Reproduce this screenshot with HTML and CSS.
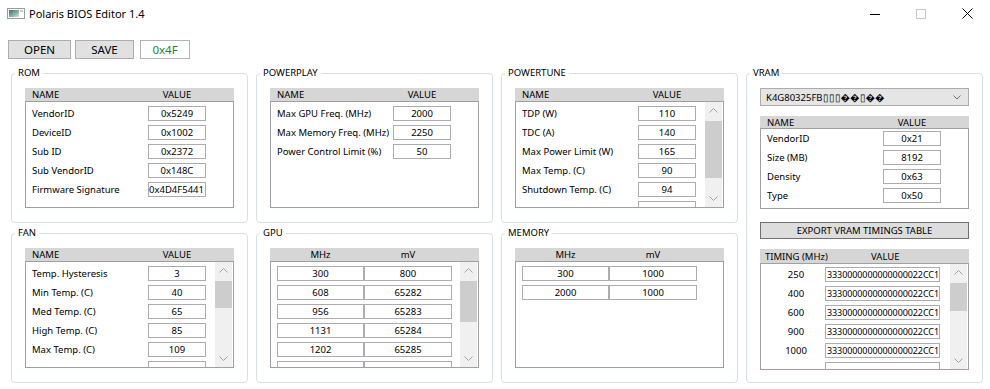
FILE: index.html
```html
<!DOCTYPE html>
<html lang="en">
<head>
    <meta charset="UTF-8">
    <title>Polaris BIOS Editor 1.4</title>
    <link rel="stylesheet" href="styles.css">
</head>
<body>
    <div class="titlebar">
        <svg class="app-icon" width="18" height="11" viewBox="0 0 18 11">
            <defs>
                <linearGradient id="ig" x1="0" y1="0" x2="1" y2="1">
                    <stop offset="0" stop-color="#3c6f7a"/>
                    <stop offset="0.6" stop-color="#8fb3a0"/>
                    <stop offset="1" stop-color="#d8e4dc"/>
                </linearGradient>
            </defs>
            <rect x="0.5" y="0.5" width="17" height="10" fill="#fff" stroke="#9a9a9a"/>
            <rect x="2" y="2" width="10" height="7" fill="url(#ig)"/>
            <rect x="13" y="2" width="3" height="2" fill="#c9c9c9"/>
        </svg>
        <span class="title">Polaris BIOS Editor 1.4</span>
        <div class="caption">
            <span class="cap-btn">
                <svg width="10" height="10" viewBox="0 0 10 10"><path d="M0 5.5H10" stroke="#000" stroke-width="1"/></svg>
            </span>
            <span class="cap-btn">
                <svg width="10" height="10" viewBox="0 0 10 10"><rect x="0.5" y="0.5" width="9" height="9" fill="none" stroke="#c6c6c6"/></svg>
            </span>
            <span class="cap-btn">
                <svg width="11" height="11" viewBox="0 0 11 11"><path d="M0.5 0.5L10.5 10.5M10.5 0.5L0.5 10.5" stroke="#000" stroke-width="1"/></svg>
            </span>
        </div>
    </div>

    <div class="toolbar">
        <button class="btn btn-open">OPEN</button>
        <button class="btn btn-save">SAVE</button>
        <div class="checksum">0x4F</div>
    </div>

    <div class="groups">
        <section class="group">
            <span class="legend">ROM</span>
            <div class="thead"><span class="hname">NAME</span><span class="hval">VALUE</span></div>
            <div class="tbody">
                <div class="rows">
                    <div class="row"><span class="name">VendorID</span><span class="field">0x5249</span></div>
                    <div class="row"><span class="name">DeviceID</span><span class="field">0x1002</span></div>
                    <div class="row"><span class="name">Sub ID</span><span class="field">0x2372</span></div>
                    <div class="row"><span class="name">Sub VendorID</span><span class="field">0x148C</span></div>
                    <div class="row"><span class="name">Firmware Signature</span><span class="field field-left">0x4D4F5441</span></div>
                </div>
            </div>
        </section>

        <section class="group">
            <span class="legend">POWERPLAY</span>
            <div class="thead"><span class="hname">NAME</span><span class="hval">VALUE</span></div>
            <div class="tbody">
                <div class="rows">
                    <div class="row"><span class="name">Max GPU Freq. (MHz)</span><span class="field">2000</span></div>
                    <div class="row"><span class="name">Max Memory Freq. (MHz)</span><span class="field">2250</span></div>
                    <div class="row"><span class="name">Power Control Limit (%)</span><span class="field">50</span></div>
                </div>
            </div>
        </section>

        <section class="group">
            <span class="legend">POWERTUNE</span>
            <div class="thead"><span class="hname">NAME</span><span class="hval">VALUE</span></div>
            <div class="tbody">
                <div class="rows">
                    <div class="row"><span class="name">TDP (W)</span><span class="field">110</span></div>
                    <div class="row"><span class="name">TDC (A)</span><span class="field">140</span></div>
                    <div class="row"><span class="name">Max Power Limit (W)</span><span class="field">165</span></div>
                    <div class="row"><span class="name">Max Temp. (C)</span><span class="field">90</span></div>
                    <div class="row"><span class="name">Shutdown Temp. (C)</span><span class="field">94</span></div>
                    <div class="row"><span class="name"></span><span class="field"></span></div>
                </div>
                <div class="scrollbar">
                    <div class="sb-btn"><svg width="9" height="5" viewBox="0 0 9 5"><path d="M0.5 4.5L4.5 0.5L8.5 4.5" fill="none" stroke="#a3a3a3"/></svg></div>
                    <div class="sb-track"><div class="sb-thumb thumb-powertune"></div></div>
                    <div class="sb-btn"><svg width="9" height="5" viewBox="0 0 9 5"><path d="M0.5 0.5L4.5 4.5L8.5 0.5" fill="none" stroke="#a3a3a3"/></svg></div>
                </div>
            </div>
        </section>

        <section class="group group-vram">
            <span class="legend">VRAM</span>
            <div class="combo">
                <span>K4G80325FB&#x25AF;&#x25AF;&#x25AF;&#xFFFD;&#xFFFD;&#x25AF;&#xFFFD;&#xFFFD;</span>
                <svg width="8" height="5" viewBox="0 0 8 5"><path d="M0.5 0.5L4 4L7.5 0.5" fill="none" stroke="#707070"/></svg>
            </div>
            <div class="thead thead-vram"><span class="hname">NAME</span><span class="hval">VALUE</span></div>
            <div class="tbody tbody-vram">
                <div class="rows rows-tight">
                    <div class="row"><span class="name">VendorID</span><span class="field">0x21</span></div>
                    <div class="row"><span class="name">Size (MB)</span><span class="field">8192</span></div>
                    <div class="row"><span class="name">Density</span><span class="field">0x63</span></div>
                    <div class="row"><span class="name">Type</span><span class="field">0x50</span></div>
                </div>
            </div>
            <button class="export-btn">EXPORT VRAM TIMINGS TABLE</button>
            <div class="thead thead-timing"><span class="htiming">TIMING (MHz)</span><span class="hval hval-wide">VALUE</span></div>
            <div class="tbody">
                <div class="rows rows-timing">
                    <div class="row"><span class="tlabel">250</span><span class="field field-wide">3330000000000000022CC1</span></div>
                    <div class="row"><span class="tlabel">400</span><span class="field field-wide">3330000000000000022CC1</span></div>
                    <div class="row"><span class="tlabel">600</span><span class="field field-wide">3330000000000000022CC1</span></div>
                    <div class="row"><span class="tlabel">900</span><span class="field field-wide">3330000000000000022CC1</span></div>
                    <div class="row"><span class="tlabel">1000</span><span class="field field-wide">3330000000000000022CC1</span></div>
                    <div class="row"><span class="tlabel"></span><span class="field field-wide"></span></div>
                </div>
                <div class="scrollbar">
                    <div class="sb-btn"><svg width="9" height="5" viewBox="0 0 9 5"><path d="M0.5 4.5L4.5 0.5L8.5 4.5" fill="none" stroke="#a3a3a3"/></svg></div>
                    <div class="sb-track"><div class="sb-thumb thumb-timing"></div></div>
                    <div class="sb-btn"><svg width="9" height="5" viewBox="0 0 9 5"><path d="M0.5 0.5L4.5 4.5L8.5 0.5" fill="none" stroke="#a3a3a3"/></svg></div>
                </div>
            </div>
        </section>

        <section class="group">
            <span class="legend">FAN</span>
            <div class="thead"><span class="hname">NAME</span><span class="hval">VALUE</span></div>
            <div class="tbody">
                <div class="rows">
                    <div class="row"><span class="name">Temp. Hysteresis</span><span class="field">3</span></div>
                    <div class="row"><span class="name">Min Temp. (C)</span><span class="field">40</span></div>
                    <div class="row"><span class="name">Med Temp. (C)</span><span class="field">65</span></div>
                    <div class="row"><span class="name">High Temp. (C)</span><span class="field">85</span></div>
                    <div class="row"><span class="name">Max Temp. (C)</span><span class="field">109</span></div>
                    <div class="row"><span class="name"></span><span class="field"></span></div>
                </div>
                <div class="scrollbar">
                    <div class="sb-btn"><svg width="9" height="5" viewBox="0 0 9 5"><path d="M0.5 4.5L4.5 0.5L8.5 4.5" fill="none" stroke="#a3a3a3"/></svg></div>
                    <div class="sb-track"><div class="sb-thumb thumb-fan"></div></div>
                    <div class="sb-btn"><svg width="9" height="5" viewBox="0 0 9 5"><path d="M0.5 0.5L4.5 4.5L8.5 0.5" fill="none" stroke="#a3a3a3"/></svg></div>
                </div>
            </div>
        </section>

        <section class="group">
            <span class="legend">GPU</span>
            <div class="thead"><span class="hcell">MHz</span><span class="hcell hcell-2">mV</span></div>
            <div class="tbody">
                <div class="rows">
                    <div class="row pair"><span class="cell">300</span><span class="cell cell-2">800</span></div>
                    <div class="row pair"><span class="cell">608</span><span class="cell cell-2">65282</span></div>
                    <div class="row pair"><span class="cell">956</span><span class="cell cell-2">65283</span></div>
                    <div class="row pair"><span class="cell">1131</span><span class="cell cell-2">65284</span></div>
                    <div class="row pair"><span class="cell">1202</span><span class="cell cell-2">65285</span></div>
                    <div class="row pair"><span class="cell"></span><span class="cell cell-2"></span></div>
                </div>
                <div class="scrollbar">
                    <div class="sb-btn"><svg width="9" height="5" viewBox="0 0 9 5"><path d="M0.5 4.5L4.5 0.5L8.5 4.5" fill="none" stroke="#a3a3a3"/></svg></div>
                    <div class="sb-track"><div class="sb-thumb thumb-gpu"></div></div>
                    <div class="sb-btn"><svg width="9" height="5" viewBox="0 0 9 5"><path d="M0.5 0.5L4.5 4.5L8.5 0.5" fill="none" stroke="#a3a3a3"/></svg></div>
                </div>
            </div>
        </section>

        <section class="group">
            <span class="legend">MEMORY</span>
            <div class="thead"><span class="hcell">MHz</span><span class="hcell hcell-2">mV</span></div>
            <div class="tbody">
                <div class="rows">
                    <div class="row pair"><span class="cell">300</span><span class="cell cell-2">1000</span></div>
                    <div class="row pair"><span class="cell">2000</span><span class="cell cell-2">1000</span></div>
                </div>
            </div>
        </section>
    </div>
</body>
</html>
```

FILE: styles.css
```css
* {
    box-sizing: border-box;
}

body {
    margin: 0;
    padding: 0;
    width: 990px;
    height: 389px;
    overflow: hidden;
    background-color: #fff;
    color: #000;
    font-family: "Noto Sans", "Open Sans", sans-serif;
    font-size: 9.5px;
}

/* title bar */

.titlebar {
    display: flex;
    align-items: center;
    height: 27px;
    padding-left: 7px;
}

.app-icon {
    display: block;
    margin-right: 4px;
}

.title {
    font-size: 11px;
}

.caption {
    display: flex;
    margin-left: auto;
}

.cap-btn {
    display: flex;
    align-items: center;
    justify-content: center;
    width: 46px;
    height: 27px;
}

.cap-btn svg {
    display: block;
}

/* toolbar */

.toolbar {
    display: flex;
    gap: 4px;
    margin-top: 13px;
    padding-left: 8px;
    height: 19px;
}

.btn {
    height: 19px;
    padding: 0;
    background-color: #e1e1e1;
    border: 1px solid #adadad;
    font-family: inherit;
    font-size: 11.5px;
    color: #000;
}

.btn-open {
    width: 63px;
}

.btn-save {
    width: 59px;
}

.checksum {
    width: 50px;
    height: 19px;
    margin-left: 2px;
    border: 1px solid #b4b4b4;
    color: #1c8a1c;
    font-size: 11.5px;
    line-height: 17px;
    text-align: center;
}

/* group boxes */

.groups {
    display: grid;
    grid-template-columns: repeat(4, 237px);
    grid-template-rows: 150px 150px;
    column-gap: 8px;
    row-gap: 10px;
    margin: 14px 0 0 11px;
}

.group {
    position: relative;
    border: 1px solid #d5dfe5;
    border-radius: 4px;
    padding: 14px 13px 14px 13px;
}

.group-vram {
    grid-row: span 2;
}

.legend {
    position: absolute;
    top: -8px;
    left: 3px;
    padding: 0 3px;
    background-color: #fff;
    line-height: 14px;
}

/* tables */

.thead {
    display: flex;
    align-items: center;
    height: 13px;
    background-color: #d6d6d6;
}

.hname {
    flex: 0 0 123px;
    padding-left: 7px;
}

.hval {
    width: 58px;
    text-align: center;
}

.hcell {
    width: 94px;
    padding-left: 7px;
    text-align: center;
}

.hcell-2 {
    width: 88px;
    padding-left: 0;
}

.htiming {
    flex: 0 0 65px;
    padding-left: 5px;
    white-space: nowrap;
}

.hval-wide {
    width: 115px;
}

.tbody {
    display: flex;
    height: 107px;
    border: 1px solid #a0a0a0;
    overflow: hidden;
}

.rows {
    flex: 1;
    display: flex;
    flex-direction: column;
    gap: 4px;
    padding-top: 4px;
    overflow: hidden;
}

.row {
    display: flex;
    align-items: center;
    flex: 0 0 15px;
}

.name {
    flex: 0 0 122px;
    padding-left: 6px;
    white-space: nowrap;
}

.field {
    width: 58px;
    height: 15px;
    border: 1px solid #abadb3;
    line-height: 13px;
    text-align: center;
    white-space: nowrap;
    overflow: hidden;
}

.field-left {
    text-align: left;
}

.field-wide {
    width: 115px;
    padding-left: 1px;
    font-size: 9px;
    letter-spacing: -0.1px;
    text-align: left;
}

.pair {
    padding-left: 6px;
}

.cell {
    width: 87px;
    height: 15px;
    border: 1px solid #abadb3;
    line-height: 13px;
    text-align: center;
}

.cell-2 {
    width: 88px;
}

.tlabel {
    flex: 0 0 64px;
    padding-left: 6px;
    text-align: center;
}

/* scrollbar */

.scrollbar {
    display: flex;
    flex-direction: column;
    flex: 0 0 17px;
    margin-right: 1px;
    background-color: #f0f0f0;
}

.sb-btn {
    display: flex;
    align-items: center;
    justify-content: center;
    height: 17px;
}

.sb-btn svg {
    display: block;
}

.sb-track {
    flex: 1;
    padding-top: 2px;
}

.sb-thumb {
    background-color: #cdcdcd;
}

.thumb-powertune {
    height: 57px;
}

.thumb-fan {
    height: 27px;
}

.thumb-gpu {
    height: 41px;
}

.thumb-timing {
    height: 28px;
}

/* vram */

.combo {
    display: flex;
    align-items: center;
    justify-content: space-between;
    height: 18px;
    padding: 0 7px 0 5px;
    margin-bottom: 10px;
    background-color: #e5e5e5;
    border: 1px solid #acacac;
}

.thead-vram {
    height: 12px;
}

.tbody-vram {
    height: 81px;
}

.rows-tight {
    padding-top: 2px;
}

.export-btn {
    display: block;
    width: 209px;
    height: 17px;
    margin: 13px 0 10px;
    padding: 0;
    background-color: #dddddd;
    border: 1px solid #707070;
    font-family: inherit;
    font-size: 9.5px;
    color: #000;
}

.thead-timing {
    height: 14px;
}

.rows-timing {
    padding-top: 3px;
}
```
